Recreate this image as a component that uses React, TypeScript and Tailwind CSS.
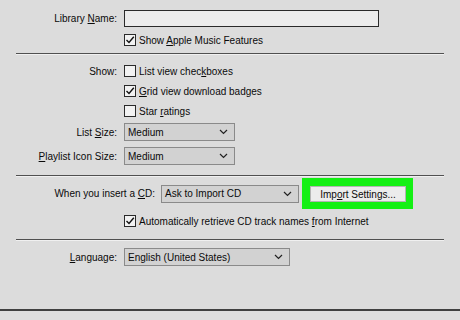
import React from 'react'

const FONT = { fontFamily: '"Liberation Sans", Arial, sans-serif' }

// underline one mnemonic letter inside a label
function Mn({ text, at }: { text: string; at: number }) {
  return (
    <>
      {text.slice(0, at)}
      <span className="underline underline-offset-[1px]">{text[at]}</span>
      {text.slice(at + 1)}
    </>
  )
}

function Check({ checked }: { checked?: boolean }) {
  return (
    <span className="w-[12px] h-[12px] border border-[#2a2a2a] bg-[#f2f2f2] flex items-center justify-center shrink-0">
      {checked && (
        <svg width="10" height="10" viewBox="0 0 10 10">
          <path d="M1.5 5 L4 7.5 L8.8 1.8" fill="none" stroke="#111" strokeWidth="1.4" />
        </svg>
      )}
    </span>
  )
}

function CheckRow({ checked, children }: { checked?: boolean; children: React.ReactNode }) {
  return (
    <div className="flex items-center gap-[3px]">
      <Check checked={checked} />
      <span>{children}</span>
    </div>
  )
}

function Dropdown({ value, width }: { value: string; width: string }) {
  return (
    <div className={`${width} h-[18px] border border-[#8a8a8a] bg-[#d2d2d2] flex items-center justify-between pl-[3px] pr-[6px]`}>
      <span>{value}</span>
      <svg width="9" height="6" viewBox="0 0 9 6">
        <path d="M1 1 L4.5 4.5 L8 1" fill="none" stroke="#222" strokeWidth="1.2" />
      </svg>
    </div>
  )
}

function Label({ children }: { children: React.ReactNode }) {
  return <div className="w-[118px] text-right pr-[1px] shrink-0">{children}</div>
}

function Sep() {
  return <div className="mx-[16px] h-px bg-[#505050] shadow-[0_1px_0_#f0f0f0]" />
}

export default function App() {
  return (
    <div
      className="w-[460px] h-[320px] bg-[#dcdcdc] text-[#0a0a0a] text-[10px] overflow-hidden flex flex-col"
      style={FONT}
    >
      <div className="mt-[10px] h-[17px] flex items-center gap-[6px]">
        <Label><span>Library <Mn text="Name:" at={0} /></span></Label>
        <div className="w-[255px] h-[17px] border border-[#2a2a2a] bg-[#ececec]" />
      </div>
      <div className="mt-[3px] h-[20px] flex items-center pl-[124px]">
        <CheckRow checked>Show <Mn text="Apple" at={0} /> Music Features</CheckRow>
      </div>

      <div className="mt-[3px]"><Sep /></div>

      <div className="mt-[7px] h-[20px] flex items-center gap-[6px]">
        <Label>Show:</Label>
        <CheckRow>List view chec<Mn text="k" at={0} />boxes</CheckRow>
      </div>
      <div className="h-[20px] flex items-center pl-[124px]">
        <CheckRow checked><Mn text="Grid" at={0} /> view download badges</CheckRow>
      </div>
      <div className="h-[20px] flex items-center pl-[124px]">
        <CheckRow>Star <Mn text="ratings" at={0} /></CheckRow>
      </div>

      <div className="mt-[2px] flex items-center gap-[6px]">
        <Label>List <Mn text="Size:" at={0} /></Label>
        <Dropdown value="Medium" width="w-[111px]" />
      </div>
      <div className="mt-[6px] flex items-center gap-[6px]">
        <Label><Mn text="Playlist" at={0} /> Icon Size:</Label>
        <Dropdown value="Medium" width="w-[111px]" />
      </div>

      <div className="mt-[10px]"><Sep /></div>

      <div className="mt-[2px] h-[31px] flex items-center">
        <div className="w-[155px] text-right shrink-0">When you insert a <Mn text="CD:" at={0} /></div>
        <div className="ml-[6px]">
          <Dropdown value="Ask to Import CD" width="w-[138px]" />
        </div>
        <div className="ml-[3px] w-[111px] h-[31px] bg-[#14f014] pl-[8px] pr-[7px] pt-[8px] pb-[7px]">
          <div className="h-full border border-[#b4b4b4] bg-[#ececec] flex items-center justify-center">
            <span>Imp<Mn text="o" at={0} />rt Settings...</span>
          </div>
        </div>
      </div>
      <div className="mt-[2px] h-[20px] flex items-center pl-[124px]">
        <CheckRow checked>Automatically retrieve CD track names <Mn text="from" at={0} /> Internet</CheckRow>
      </div>

      <div className="mt-[8px]"><Sep /></div>

      <div className="mt-[8px] flex items-center gap-[6px]">
        <Label><Mn text="Language:" at={0} /></Label>
        <Dropdown value="English (United States)" width="w-[166px]" />
      </div>

      <div className="mt-[43px] h-[2px] bg-[#404040]" />
      <div className="flex-1 bg-[#dedede]" />
    </div>
  )
}
